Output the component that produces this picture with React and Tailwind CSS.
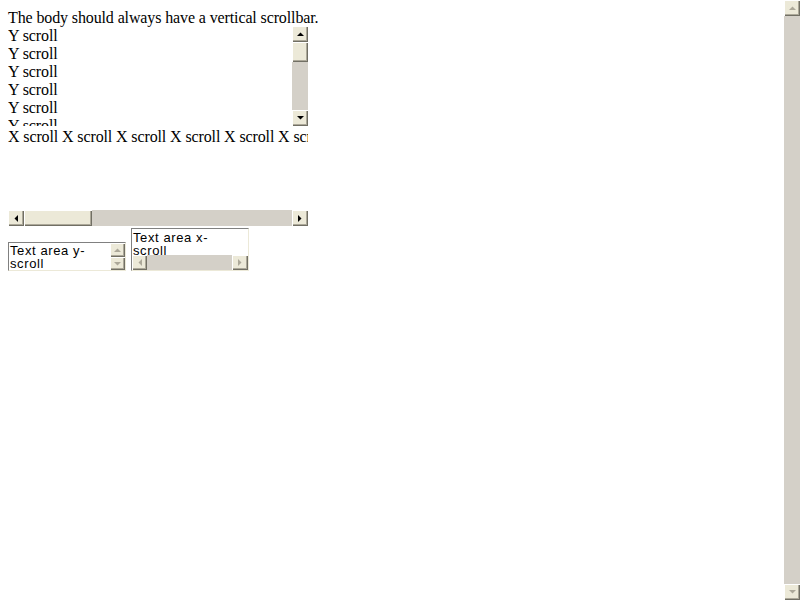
const Arrow = ({ dir, disabled }) => {
  const fill = disabled ? '#aca899' : '#000';
  const pts = {
    up: '0,4 7,4 3.5,0.5',
    down: '0,0 7,0 3.5,3.5',
    left: '4,0 4,7 0.5,3.5',
    right: '0,0 0,7 3.5,3.5',
  }[dir];
  const vertical = dir === 'up' || dir === 'down';
  return (
    <svg width={vertical ? 7 : 4} height={vertical ? 4 : 7} viewBox={vertical ? '0 0 7 4' : '0 0 4 7'}>
      <polygon points={pts} fill={fill} />
    </svg>
  );
};

const Btn = ({ dir, disabled, className = 'w-[16px] h-[16px]' }) => (
  <div
    className={`${className} shrink-0 flex items-center justify-center bg-[#ece9d8] shadow-[inset_1px_1px_0_#fff,inset_-1px_-1px_0_#716f64,inset_-2px_-2px_0_#aca899]`}
  >
    <Arrow dir={dir} disabled={disabled} />
  </div>
);

const Thumb = ({ className }) => (
  <div
    className={`${className} shrink-0 bg-[#ece9d8] shadow-[inset_1px_1px_0_#fff,inset_-1px_-1px_0_#716f64,inset_-2px_-2px_0_#aca899]`}
  />
);

export default function App() {
  const ys = Array.from({ length: 10 });
  const xs = Array.from({ length: 10 });

  return (
    <div className="flex h-screen w-full bg-white overflow-hidden">
      <div className="flex-1 p-[8px] font-['Liberation_Serif',serif] text-[16px] leading-[18px] tracking-[-0.12px] text-black">
        <div className="h-[18px] pt-[1px]">The body should always have a vertical scrollbar.</div>

        {/* Y scroll box */}
        <div className="flex w-[300px] h-[100px]">
          <div className="flex-1 overflow-hidden pt-[1px]">
            {ys.map((_, i) => (
              <div key={i}>Y scroll</div>
            ))}
          </div>
          <div className="flex flex-col w-[16px] bg-[#d4d0c8]">
            <Btn dir="up" />
            <Thumb className="w-[16px] h-[20px]" />
            <div className="flex-1" />
            <Btn dir="down" />
          </div>
        </div>

        {/* X scroll box */}
        <div className="flex flex-col w-[300px] h-[100px]">
          <div className="flex-1 overflow-hidden whitespace-nowrap pt-[2px]">
            {xs.map(() => 'X scroll').join(' ')}
          </div>
          <div className="flex h-[16px] bg-[#d4d0c8]">
            <Btn dir="left" />
            <Thumb className="w-[68px] h-[16px]" />
            <div className="flex-1" />
            <Btn dir="right" />
          </div>
        </div>

        {/* text areas */}
        <div className="flex items-end gap-[5px] mt-[2px] font-['Liberation_Sans',sans-serif] text-[13px] leading-[13px] tracking-[0.6px]">
          <div className="flex w-[118px] h-[29px] bg-white border border-t-[#808080] border-l-[#808080] border-b-[#ece9d8] border-r-[#ece9d8]">
            <div className="flex-1 overflow-hidden pl-[1px] pt-[1px]">Text area y-scroll</div>
            <div className="flex flex-col w-[15px]">
              <Btn dir="up" disabled className="w-[15px] h-[14px]" />
              <Btn dir="down" disabled className="w-[15px] h-[13px]" />
            </div>
          </div>
          <div className="flex flex-col w-[118px] h-[43px] bg-white border border-t-[#808080] border-l-[#808080] border-b-[#ece9d8] border-r-[#ece9d8]">
            <div className="flex-1 overflow-hidden pl-[1px] pt-[2px] w-[90px]">Text area x-scroll</div>
            <div className="flex h-[15px] bg-[#d4d0c8]">
              <Btn dir="left" disabled className="w-[15px] h-[15px]" />
              <div className="flex-1" />
              <Btn dir="right" disabled className="w-[16px] h-[15px]" />
            </div>
          </div>
        </div>
      </div>

      {/* page scrollbar */}
      <div className="flex flex-col w-[16px] h-screen bg-[#d4d0c8]">
        <Btn dir="up" disabled />
        <div className="flex-1" />
        <Btn dir="down" disabled />
      </div>
    </div>
  );
}
